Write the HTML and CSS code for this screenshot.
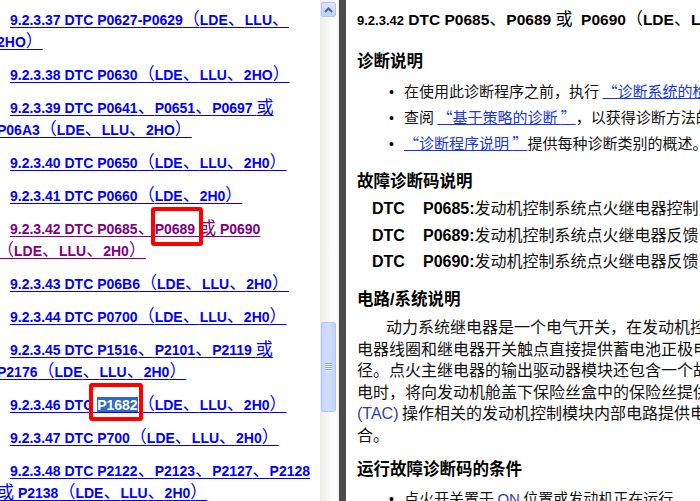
FILE: index.html
```html
<!DOCTYPE html>
<html lang="zh-CN">
<head>
<meta charset="utf-8">
<title>9.2.3.42 DTC P0685、P0689 或 P0690</title>
<link rel="stylesheet" href="styles.css">
</head>
<body>
<div class="left">
  <p class="entry"><a href="#">9.2.3.37 DTC P0627-P0629<span class="cj">（</span>LDE<span class="cj">、</span>LLU<span class="cj">、</span><br>2HO<span class="cj">）</span></a></p>
  <p class="entry"><a href="#">9.2.3.38 DTC P0630<span class="cj">（</span>LDE<span class="cj">、</span>LLU<span class="cj">、</span>2HO<span class="cj">）</span></a></p>
  <p class="entry"><a href="#">9.2.3.39 DTC P0641<span class="cj">、</span>P0651<span class="cj">、</span>P0697 <span class="cj">或</span><br>P06A3<span class="cj">（</span>LDE<span class="cj">、</span>LLU<span class="cj">、</span>2HO<span class="cj">）</span></a></p>
  <p class="entry"><a href="#">9.2.3.40 DTC P0650<span class="cj">（</span>LDE<span class="cj">、</span>LLU<span class="cj">、</span>2H0<span class="cj">）</span></a></p>
  <p class="entry"><a href="#">9.2.3.41 DTC P0660<span class="cj">（</span>LDE<span class="cj">、</span>2H0<span class="cj">）</span></a></p>
  <p class="entry"><a href="#" class="visited">9.2.3.42 DTC P0685<span class="cj">、</span>P0689 <span class="cj">或</span> P0690<br><span class="cj">（</span>LDE<span class="cj">、</span>LLU<span class="cj">、</span>2H0<span class="cj">）</span></a></p>
  <p class="entry"><a href="#">9.2.3.43 DTC P06B6<span class="cj">（</span>LDE<span class="cj">、</span>LLU<span class="cj">、</span>2H0<span class="cj">）</span></a></p>
  <p class="entry"><a href="#">9.2.3.44 DTC P0700<span class="cj">（</span>LDE<span class="cj">、</span>LLU<span class="cj">、</span>2H0<span class="cj">）</span></a></p>
  <p class="entry"><a href="#">9.2.3.45 DTC P1516<span class="cj">、</span>P2101<span class="cj">、</span>P2119 <span class="cj">或</span><br>P2176<span class="cj">（</span>LDE<span class="cj">、</span>LLU<span class="cj">、</span>2H0<span class="cj">）</span></a></p>
  <p class="entry"><a href="#">9.2.3.46 DTC <span class="sel">P1682</span><span class="cj">（</span>LDE<span class="cj">、</span>LLU<span class="cj">、</span>2H0<span class="cj">）</span></a></p>
  <p class="entry"><a href="#">9.2.3.47 DTC P700<span class="cj">（</span>LDE<span class="cj">、</span>LLU<span class="cj">、</span>2H0<span class="cj">）</span></a></p>
  <p class="entry"><a href="#">9.2.3.48 DTC P2122<span class="cj">、</span>P2123<span class="cj">、</span>P2127<span class="cj">、</span>P2128<br><span class="cj">或</span> P2138<span class="cj">（</span>LDE<span class="cj">、</span>LLU<span class="cj">、</span>2H0<span class="cj">）</span></a></p>
  <div class="mark mark-a"></div>
  <div class="mark mark-b"></div>
</div>
<div class="sb">
  <div class="sb-up">
    <svg width="9" height="6" viewBox="0 0 9 6"><path d="M1 5 L4.5 1.5 L8 5" fill="none" stroke="#4d6185" stroke-width="2"/></svg>
  </div>
  <div class="sb-thumb"><span class="grip"></span></div>
</div>
<div class="gap"></div>
<div class="divider"></div>
<div class="right">
  <div class="title"><span class="num">9.2.3.42</span> DTC P0685<span class="cj">、</span>P0689 <span class="cj">或</span>&nbsp; P0690<span class="cj">（</span>LDE<span class="cj">、</span>LLU<span class="cj">、</span>2H0<span class="cj">）</span></div>
  <h2 class="h h1">诊断说明</h2>
  <ul class="list l1">
    <li>在使用此诊断程序之前，执行 <a href="#"><span class="q">“</span>诊断系统的检查 - 车辆<span class="q">”</span></a>。</li>
    <li>查阅 <a href="#"><span class="q">“</span>基于策略的诊断 <span class="q">”</span></a>，以获得诊断方法的概述。</li>
    <li><a href="#"><span class="q">“</span>诊断程序说明 <span class="q">”</span></a>提供每种诊断类别的概述。</li>
  </ul>
  <h2 class="h h2">故障诊断码说明</h2>
  <div class="dtcs">
    <div class="dtc"><b class="c1">DTC</b><b>P0685:</b>发动机控制系统点火继电器控制电路</div>
    <div class="dtc"><b class="c1">DTC</b><b>P0689:</b>发动机控制系统点火继电器反馈电路低电压</div>
    <div class="dtc"><b class="c1">DTC</b><b>P0690:</b>发动机控制系统点火继电器反馈电路高电压</div>
  </div>
  <h2 class="h h3">电路<span class="sl">/</span>系统说明</h2>
  <p class="para">动力系统继电器是一个电气开关，在发动机控制模块向继电器线圈供电时闭合。<br>电器线圈和继电器开关触点直接提供蓄电池正极电压。发动机控制模块提供接地路<br>径。点火主继电器的输出驱动器模块还包含一个故障诊断电路。当继电器线圈通<br>电时，将向发动机舱盖下保险丝盒中的保险丝提供蓄电池电压，为节气门执行器控制<br><span class="en">(TAC)</span> 操作相关的发动机控制模块内部电路提供电压。继电器开关触点闭<br>合。</p>
  <h2 class="h h4">运行故障诊断码的条件</h2>
  <ul class="list l2">
    <li>点火开关置于 <span class="en">ON</span> 位置或发动机正在运行。</li>
  </ul>
</div>
</body>
</html>
```

FILE: styles.css
```css
html, body {
  margin: 0;
  padding: 0;
}
body {
  width: 700px;
  height: 501px;
  overflow: hidden;
  display: flex;
  background: #fff;
}

/* left table of contents */
.left {
  position: relative;
  width: 320px;
  flex: none;
  overflow: hidden;
  padding-top: 9px;
  box-sizing: border-box;
  font: bold 14px/22px "Liberation Sans", "Noto Sans CJK SC", sans-serif;
}
.entry {
  margin: 0 0 11px -3px;
  text-indent: 13px;
  white-space: nowrap;
}
.entry a {
  color: #0000ff;
  text-decoration: underline;
  text-underline-offset: 2px;
}
.entry a.visited {
  color: #800080;
}
.cj {
  font-family: "Noto Sans CJK SC", sans-serif;
  font-weight: normal;
  font-size: 17px;
  line-height: 16px;
}
.sel {
  background: #316ac5;
  color: #fff;
}
.mark {
  position: absolute;
  border: 4px solid #ff0000;
  border-radius: 3px;
  box-sizing: border-box;
}
.mark-a {
  left: 151px;
  top: 207px;
  width: 52px;
  height: 39px;
}
.mark-b {
  left: 89px;
  top: 383px;
  width: 54px;
  height: 38px;
}

/* scrollbar */
.sb {
  width: 17px;
  flex: none;
  display: flex;
  flex-direction: column;
  align-items: center;
  background: linear-gradient(to right, #ecebe3, #fbfbf8 60%, #ffffff);
}
.sb-up {
  margin-top: 2px;
  width: 15px;
  height: 15px;
  box-sizing: border-box;
  border: 1px solid #b2c5f3;
  border-radius: 2px;
  background: linear-gradient(to bottom, #dbe5fe, #bfd1fb);
  display: flex;
  align-items: center;
  justify-content: center;
}
.sb-thumb {
  margin-top: 305px;
  width: 15px;
  height: 90px;
  box-sizing: border-box;
  border: 1px solid #b4c7f4;
  border-radius: 2px;
  background: linear-gradient(to right, #c6d5fc, #d2defd 50%, #c3d3fb);
  display: flex;
  align-items: center;
  justify-content: center;
}
.grip {
  width: 7px;
  height: 8px;
  background: repeating-linear-gradient(to bottom, #8ea7ea 0 1px, #eef3ff 1px 2px);
}
.gap {
  width: 2px;
  flex: none;
  background: #efefec;
}
.divider {
  width: 7px;
  flex: none;
  background: #4b4b4b;
}

/* right document */
.right {
  flex: 1;
  overflow: hidden;
  padding: 10px 0 0 11px;
  white-space: nowrap;
  color: #111;
  font-family: "Noto Sans CJK SC", sans-serif;
}
.title {
  height: 20px;
  font: bold 15.5px/20px "Liberation Sans", "Noto Sans CJK SC", sans-serif;
  color: #000;
}
.title .num {
  font-size: 13px;
}
.title .cj {
  font-size: 17px;
  line-height: 16px;
}
.h {
  margin: 0;
  font: bold 16.5px/24px "Noto Sans CJK SC", sans-serif;
  color: #000;
}
.h .sl {
  font-family: "Liberation Sans", sans-serif;
}
.h1 { margin-top: 18px; }
.h2 { margin-top: 12px; }
.h3 { margin-top: 11.5px; }
.h4 { margin-top: 10.3px; }
.list {
  list-style: none;
  margin: 0;
  padding: 0 0 0 32px;
  font-size: 15px;
  line-height: 26px;
}
.l1 { margin-top: 6px; }
.l2 { margin-top: 5px; }
.list li::before {
  content: "•";
  display: inline-block;
  width: 15px;
  font: 14px "Liberation Sans", sans-serif;
  color: #000;
}
.list a {
  color: #1836e8;
  text-decoration: underline;
}
.list .q {
  display: inline-block;
  width: 15px;
  text-align: center;
  text-decoration: underline;
}
.dtcs {
  margin-top: 3px;
  padding-left: 15px;
  font-size: 16px;
  line-height: 25.5px;
}
.dtc b {
  font-family: "Liberation Sans", sans-serif;
  font-weight: bold;
  color: #000;
}
.dtc .c1 {
  display: inline-block;
  width: 51px;
}
.para {
  margin: 5.3px 0 0;
  font-size: 16px;
  line-height: 21.4px;
  text-indent: 29px;
}
.en {
  font-family: "Liberation Sans", sans-serif;
  color: #2c3fb0;
}
```
